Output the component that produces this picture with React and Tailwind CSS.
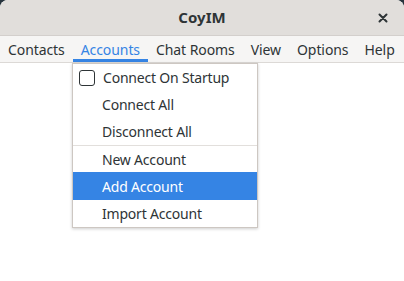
export default function App() {
  const menus = ['Contacts', 'Accounts', 'Chat Rooms', 'View', 'Options', 'Help'];

  return (
    <div className="w-[404px] h-[281px] bg-[#27343d] overflow-hidden" style={{ fontFamily: '"Noto Sans", sans-serif' }}>
      <div className="relative w-full h-full bg-white rounded-t-[8px] overflow-hidden flex flex-col">
        {/* header bar */}
        <div className="h-[36px] shrink-0 bg-[#e1dedb] flex items-center justify-center relative border-b border-[#d3cfcc]">
          <span className="text-[15px] font-bold text-[#2e3436]">CoyIM</span>
          <button className="absolute right-[14px] top-[11px] w-[14px] h-[14px] flex items-center justify-center">
            <svg width="10" height="10" viewBox="0 0 10 10">
              <path d="M1.5 1.5 L8.5 8.5 M8.5 1.5 L1.5 8.5" stroke="#2e3436" strokeWidth="2" strokeLinecap="round" />
            </svg>
          </button>
        </div>

        {/* menubar */}
        <div className="h-[27px] shrink-0 bg-[#f6f5f4] border-b border-[#dcd9d6] flex items-stretch tracking-[-0.08px]">
          {menus.map((m) => (
            <div
              key={m}
              className={`px-[8px] flex items-center whitespace-nowrap text-[14px] ${m === 'Accounts' ? 'text-[#3584e4] border-b-[3px] border-[#3584e4] pt-[3px]' : 'text-[#2e3436]'}`}
            >
              {m}
            </div>
          ))}
        </div>

        <div className="flex-1 bg-white" />

        {/* dropdown */}
        <div className="absolute left-[72px] top-[63px] w-[186px] bg-white border border-[#cdc7c2] shadow-[0_1px_3px_rgba(0,0,0,0.2)] text-[14px] tracking-[-0.2px] text-[#2e3436]">
          <div className="h-[27px] flex items-center pl-[6px]">
            <span className="w-[16px] h-[16px] border border-[#2e3436] rounded-[3px] mr-[8px] bg-white" />
            <span>Connect On Startup</span>
          </div>
          <div className="h-[27px] flex items-center pl-[29px]">Connect All</div>
          <div className="h-[27px] flex items-center pl-[29px]">Disconnect All</div>
          <div className="h-px bg-[#e2dfdc]" />
          <div className="h-[26px] flex items-center pl-[29px]">New Account</div>
          <div className="h-[28px] flex items-center pl-[29px] bg-[#3584e4] text-white">Add Account</div>
          <div className="h-[27px] flex items-center pl-[29px]">Import Account</div>
        </div>
      </div>
    </div>
  );
}
